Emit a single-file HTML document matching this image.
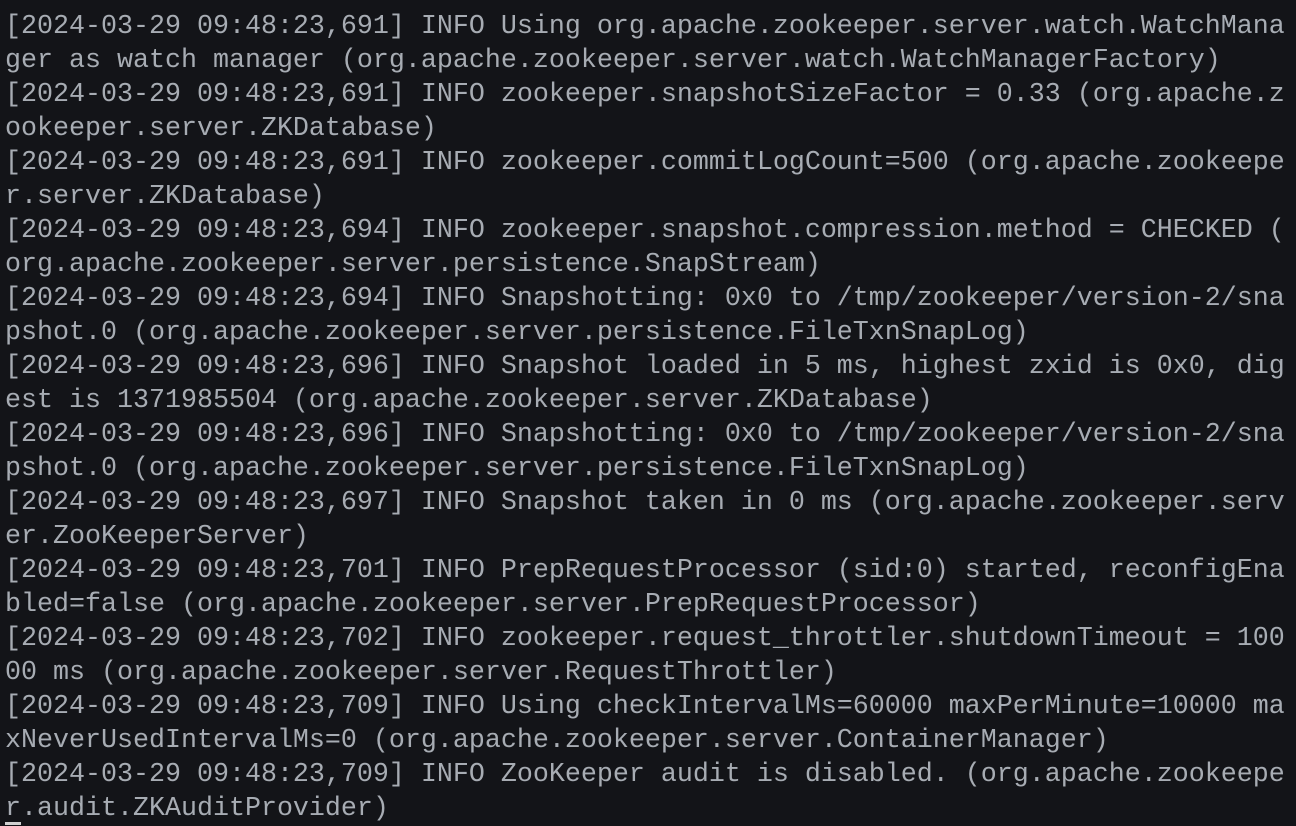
<!DOCTYPE html>
<html><head><style>
html,body{margin:0;padding:0;background:#131418;width:1296px;height:826px;overflow:hidden}
pre{margin:0;position:absolute;left:5px;top:10px;font-family:"Liberation Mono",monospace;font-size:26.67px;line-height:34px;color:#a7acb3;white-space:pre;letter-spacing:0}
.cur{position:absolute;left:5px;top:822px;width:16px;height:3px;background:#d0d0d0}
</style></head><body><pre>[2024-03-29 09:48:23,691] INFO Using org.apache.zookeeper.server.watch.WatchMana
ger as watch manager (org.apache.zookeeper.server.watch.WatchManagerFactory)
[2024-03-29 09:48:23,691] INFO zookeeper.snapshotSizeFactor = 0.33 (org.apache.z
ookeeper.server.ZKDatabase)
[2024-03-29 09:48:23,691] INFO zookeeper.commitLogCount=500 (org.apache.zookeepe
r.server.ZKDatabase)
[2024-03-29 09:48:23,694] INFO zookeeper.snapshot.compression.method = CHECKED (
org.apache.zookeeper.server.persistence.SnapStream)
[2024-03-29 09:48:23,694] INFO Snapshotting: 0x0 to /tmp/zookeeper/version-2/sna
pshot.0 (org.apache.zookeeper.server.persistence.FileTxnSnapLog)
[2024-03-29 09:48:23,696] INFO Snapshot loaded in 5 ms, highest zxid is 0x0, dig
est is 1371985504 (org.apache.zookeeper.server.ZKDatabase)
[2024-03-29 09:48:23,696] INFO Snapshotting: 0x0 to /tmp/zookeeper/version-2/sna
pshot.0 (org.apache.zookeeper.server.persistence.FileTxnSnapLog)
[2024-03-29 09:48:23,697] INFO Snapshot taken in 0 ms (org.apache.zookeeper.serv
er.ZooKeeperServer)
[2024-03-29 09:48:23,701] INFO PrepRequestProcessor (sid:0) started, reconfigEna
bled=false (org.apache.zookeeper.server.PrepRequestProcessor)
[2024-03-29 09:48:23,702] INFO zookeeper.request_throttler.shutdownTimeout = 100
00 ms (org.apache.zookeeper.server.RequestThrottler)
[2024-03-29 09:48:23,709] INFO Using checkIntervalMs=60000 maxPerMinute=10000 ma
xNeverUsedIntervalMs=0 (org.apache.zookeeper.server.ContainerManager)
[2024-03-29 09:48:23,709] INFO ZooKeeper audit is disabled. (org.apache.zookeepe
r.audit.ZKAuditProvider)</pre><div class="cur"></div></body></html>
